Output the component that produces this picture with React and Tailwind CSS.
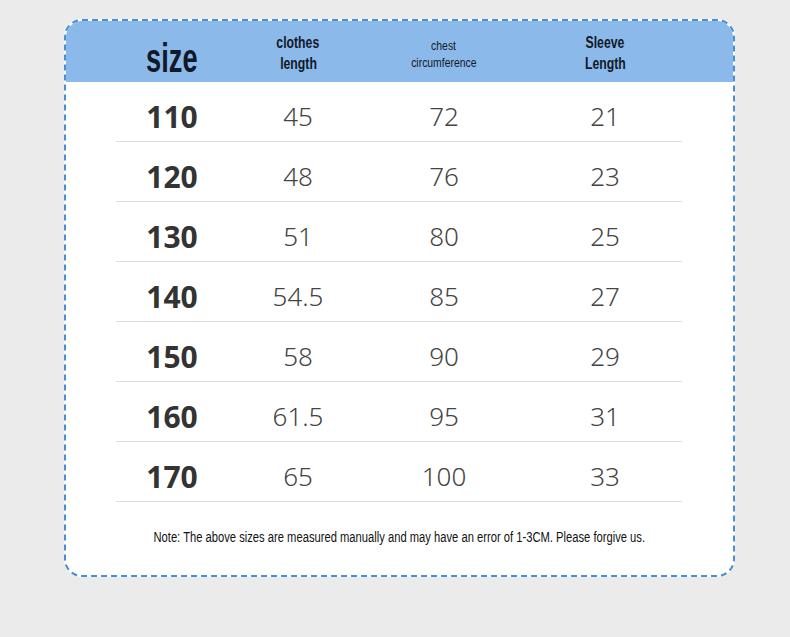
import React from 'react';

const rows = [
  ['110', '45', '72', '21'],
  ['120', '48', '76', '23'],
  ['130', '51', '80', '25'],
  ['140', '54.5', '85', '27'],
  ['150', '58', '90', '29'],
  ['160', '61.5', '95', '31'],
  ['170', '65', '100', '33'],
];

const narrow = "font-['Liberation_Sans',Arial,sans-serif]";
const nums = "font-['Noto_Sans','Open_Sans',sans-serif]";

// condensed look: Liberation Sans squeezed horizontally
const Squeeze = ({ children, className = 'scale-x-[0.8]' }) => (
  <span className={`inline-block origin-center whitespace-nowrap ${className}`}>{children}</span>
);

export default function App() {
  return (
    <div className="w-[790px] h-[637px] bg-[#ebebeb] pt-[19px] pl-[64px]">
      <div className="w-[671px] h-[558px] bg-white border-2 border-dashed border-[#4a8ed6] rounded-[18px] overflow-hidden flex flex-col">
        {/* header */}
        <div className={`h-[61px] bg-[#8bb9ea] flex items-center text-[#111827] ${narrow}`}>
          <div className="w-[120px] ml-[46px] text-center text-[40px] font-bold leading-none pt-[12px]">
            <Squeeze className="scale-x-[0.68]">size</Squeeze>
          </div>
          <div className="w-[120px] ml-[6px] text-center text-[17px] font-bold leading-[21px] pt-[2px]">
            <Squeeze className="scale-x-[0.72]">clothes</Squeeze><br /><Squeeze className="scale-x-[0.72]">length</Squeeze>
          </div>
          <div className="w-[140px] ml-[16px] text-center text-[13px] font-medium leading-[17px] pt-[4px]">
            <Squeeze>chest</Squeeze><br /><Squeeze>circumference</Squeeze>
          </div>
          <div className="w-[120px] ml-[31px] text-center text-[17px] font-bold leading-[21px] pt-[2px]">
            <Squeeze className="scale-x-[0.72]">Sleeve</Squeeze><br /><Squeeze className="scale-x-[0.72]">Length</Squeeze>
          </div>
        </div>

        {/* rows */}
        <div className="flex flex-col">
          {rows.map(r => (
            <div key={r[0]} className="h-[60px] flex flex-col">
              <div className={`flex-1 flex items-center pt-[9px] ${nums}`}>
                <div className="w-[120px] ml-[46px] text-center text-[30px] font-bold text-[#333]">{r[0]}</div>
                <div className="w-[120px] ml-[6px] text-center text-[26px] font-light text-[#444]">{r[1]}</div>
                <div className="w-[140px] ml-[16px] text-center text-[26px] font-light text-[#444]">{r[2]}</div>
                <div className="w-[120px] ml-[31px] text-center text-[26px] font-light text-[#444]">{r[3]}</div>
              </div>
              <div className="ml-[50px] w-[566px] h-px bg-[#dcdcdc]" />
            </div>
          ))}
        </div>

        <div className={`flex-1 flex justify-center pt-[25px] text-[14px] font-medium text-[#111] ${narrow}`}>
          <Squeeze>Note: The above sizes are measured manually and may have an error of 1-3CM. Please forgive us.</Squeeze>
        </div>
      </div>
    </div>
  );
}
